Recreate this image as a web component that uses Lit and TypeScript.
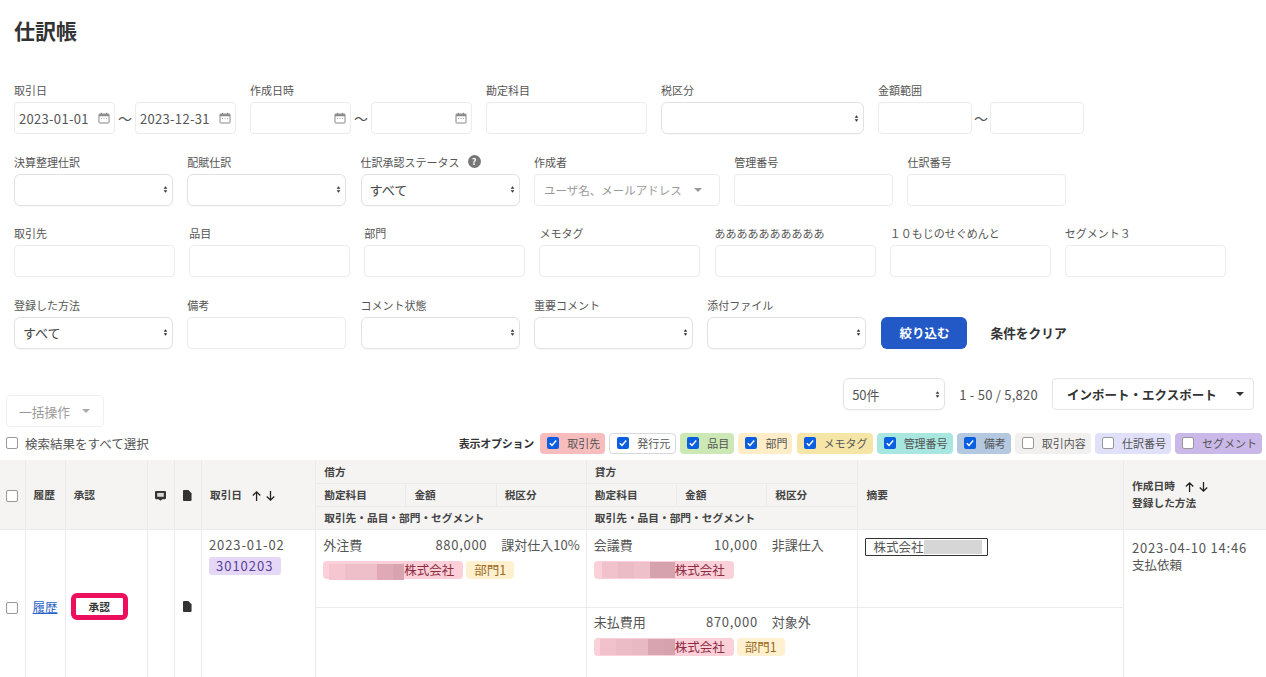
import { LitElement, html, css, svg } from 'lit';
import { customElement } from 'lit/decorators.js';

const calendar = html`<svg class="cal" viewBox="0 0 12 12" width="12" height="12">
  <path d="M1.5 2h9a.5.5 0 0 1 .5.5v8a.5.5 0 0 1-.5.5h-9a.5.5 0 0 1-.5-.5v-8a.5.5 0 0 1 .5-.5z" fill="none" stroke="#888" stroke-width="1"/>
  <path d="M1 2.2h10v2H1zM3 .8h1v2H3zM8 .8h1v2H8z" fill="#888"/>
  <path d="M3 6.5h1M5.5 6.5h1M8 6.5h1" stroke="#aaa" stroke-width="1"/>
</svg>`;

const updown = html`<svg class="updown" viewBox="0 0 6 10" width="5" height="9">
  <path d="M3 1l2.2 3H.8zM3 9L.8 6h4.4z" fill="#333"/>
</svg>`;

const caret = (color = '#555') => html`<svg class="caret" viewBox="0 0 10 6" width="10" height="6">
  <path d="M1 1h8L5 5z" fill=${color}/>
</svg>`;

const sortIcons = html`<svg class="sort" viewBox="0 0 28 12" width="26" height="12">
  ${svg`<path d="M6 11.5V2M2 5.5L6 1.5l4 4M21 .5V10M17 6.5l4 4 4-4" fill="none" stroke="#222" stroke-width="1.4"/>`}
</svg>`;

const fileIcon = html`<svg viewBox="0 0 10 12" width="9" height="11">
  <path d="M1 0h5l3.5 3.5V11a1 1 0 0 1-1 1H1a1 1 0 0 1-1-1V1a1 1 0 0 1 1-1z" fill="#333"/>
</svg>`;

const commentIcon = html`<svg viewBox="0 0 12 12" width="11" height="11">
  <path d="M1.2 1h9.6A1.2 1.2 0 0 1 12 2.2v6.6A1.2 1.2 0 0 1 10.8 10H8l-2 1.6L4 10H1.2A1.2 1.2 0 0 1 0 8.8V2.2A1.2 1.2 0 0 1 1.2 1z" fill="#333"/>
  <path d="M2.4 3.2h7.2v4.2H2.400z" fill="#d8d7d5"/>
</svg>`;

const chips = [
  { label: '取引先', cls: 'c-red', on: true },
  { label: '発行元', cls: 'c-white', on: true },
  { label: '品目', cls: 'c-green', on: true },
  { label: '部門', cls: 'c-orange', on: true },
  { label: 'メモタグ', cls: 'c-yellow', on: true },
  { label: '管理番号', cls: 'c-teal', on: true },
  { label: '備考', cls: 'c-blue', on: true },
  { label: '取引内容', cls: 'c-gray', on: false },
  { label: '仕訳番号', cls: 'c-lav', on: false },
  { label: 'セグメント', cls: 'c-purple', on: false },
];

// 伏せ字のモザイク [幅, 色]
type Block = [number, string];

const mosaic = (blocks: Block[], low = false) => html`<span class="mosaic ${low ? 'low' : ''}">
  ${blocks.map(([w, c]) => html`<i style="width:${w}px;background:${c}"></i>`)}
</span>`;

const mosaicA: Block[] = [[16, '#f5c6d0'], [16, '#efbfc9'], [16, '#eebec9'], [16, '#dfaab6'], [11, '#d8a4b0']];
const mosaicB: Block[] = [[16, '#f2c2cc'], [16, '#ecbcc6'], [16, '#eec0ca'], [25, '#d6a2ae']];
const mosaicC: Block[] = [[16, '#f2c2cc'], [16, '#ecbcc6'], [16, '#e9b9c3'], [16, '#d8a4b0'], [11, '#d6a2ae']];

@customElement('app-root')
export class AppRoot extends LitElement {
  static styles = css`
    :host {
      display: block;
      height: 677px;
      overflow: hidden;
      background: #fff;
      color: #444;
      font-family: 'Noto Sans CJK JP', 'Liberation Sans', sans-serif;
      font-size: 13px;
    }
    h1 {
      margin: 0;
      padding: 14px 14px 0;
      font-size: 21px;
      line-height: 32px;
      font-weight: 700;
      color: #333;
    }
    .filters {
      padding: 36px 14px 0;
    }
    .row {
      display: flex;
      gap: 14.3px;
      height: 71.5px;
      align-items: flex-start;
    }
    .row1 {
      gap: 14px;
    }
    .row3 {
      gap: 14.15px;
    }
    .field {
      display: flex;
      flex-direction: column;
    }
    .field > label {
      font-size: 11px;
      line-height: 16px;
      height: 16px;
      margin-bottom: 4px;
      color: #555;
      display: flex;
      align-items: center;
      gap: 8px;
      white-space: nowrap;
    }
    .box {
      box-sizing: border-box;
      height: 32px;
      border: 1px solid #ececec;
      border-radius: 4px;
      background: #fff;
      display: flex;
      align-items: center;
      padding: 0 4px;
    }
    .select {
      border-radius: 6px;
      border-color: #e2e2e2;
      box-shadow: 0 1px 1px rgba(0, 0, 0, 0.03);
      padding: 0 4px 0 8px;
      justify-content: space-between;
    }
    .w159 { width: 159px; }
    .w161 { width: 161px; }
    .w203 { width: 203px; }
    .w186 { width: 186px; }
    .date {
      width: 101px;
      justify-content: space-between;
      padding: 0 4px 0 4px;
      letter-spacing: 0.3px;
      color: #555;
    }
    .range {
      display: flex;
      align-items: center;
      gap: 0;
    }
    .tilde {
      width: 20px;
      text-align: center;
      color: #555;
      font-size: 14px;
    }
    .amount1 { width: 94px; }
    .amount2 { width: 94px; }
    .tilde2 { width: 18px; }
    .help {
      width: 13px;
      height: 13px;
      border-radius: 50%;
      background: #777;
      color: #fff;
      font-size: 9px;
      line-height: 13px;
      text-align: center;
      font-weight: 700;
    }
    .placeholder {
      color: #999;
      font-size: 11.5px;
      padding-left: 4px;
      white-space: nowrap;
    }
    .user {
      padding: 0 16px 0 5px;
      justify-content: space-between;
    }
    .actions {
      display: flex;
      align-items: center;
      padding-top: 20px;
      padding-left: 1px;
      gap: 23px;
    }
    .primary {
      box-sizing: border-box;
      width: 86px;
      height: 32px;
      border-radius: 6px;
      border: 0;
      background: #2259c6;
      color: #fff;
      font: 700 12.5px 'Noto Sans CJK JP', sans-serif;
    }
    .clear {
      font-size: 12.7px;
      font-weight: 700;
      color: #333;
    }
    .toolbar {
      display: flex;
      justify-content: space-between;
      padding: 0 12px 0 6px;
      height: 63px;
    }
    .bulk {
      box-sizing: border-box;
      width: 98px;
      height: 32px;
      margin-top: 27px;
      border: 1px solid #f0f0f0;
      border-radius: 4px;
      display: flex;
      align-items: center;
      justify-content: center;
      gap: 11px;
      color: #999;
      font-size: 12.8px;
    }
    .right {
      display: flex;
      align-items: center;
      height: 32px;
      margin-top: 10px;
    }
    .per {
      box-sizing: border-box;
      width: 102px;
      height: 32px;
      font-size: 13px;
      color: #555;
    }
    .count {
      margin: 0 14px;
      font-size: 13px;
      letter-spacing: 0.25px;
      color: #555;
      white-space: nowrap;
    }
    .export {
      box-sizing: border-box;
      width: 202px;
      height: 32px;
      border: 1px solid #e4e4e4;
      border-radius: 4px;
      display: flex;
      align-items: center;
      justify-content: space-between;
      padding: 0 8px 0 14px;
      font-size: 12.5px;
      font-weight: 700;
      color: #333;
      white-space: nowrap;
    }
    .options {
      display: flex;
      justify-content: space-between;
      align-items: center;
      height: 24px;
      padding: 0 4px 0 6px;
    }
    .all {
      display: flex;
      align-items: center;
      gap: 7px;
      font-size: 12.5px;
      color: #555;
    }
    .cb {
      box-sizing: border-box;
      display: inline-block;
      flex: none;
      width: 12px;
      height: 12px;
      border: 1px solid #999;
      border-radius: 2px;
      background: #fff;
    }
    .cb.on {
      border: 0;
      background: #0a5fe0;
    }
    .cb.on svg {
      display: block;
    }
    .chips {
      display: flex;
      align-items: center;
      gap: 4.1px;
    }
    .chips b {
      font-size: 11px;
      letter-spacing: -0.25px;
      font-weight: 700;
      margin-right: 2px;
      color: #333;
      white-space: nowrap;
    }
    .chip {
      box-sizing: border-box;
      height: 21px;
      display: flex;
      align-items: center;
      gap: 8px;
      padding: 0 5px 0 7px;
      border-radius: 4px;
      font-size: 11px;
      color: #555;
      white-space: nowrap;
    }
    .c-red { background: #f7bcbc; }
    .c-white { background: #fff; border: 1px solid #d8d8d8; }
    .c-green { background: #cce8b5; }
    .c-orange { background: #ffedc8; }
    .c-yellow { background: #f5e6a8; }
    .c-teal { background: #a8e6e0; }
    .c-blue { background: #b4c8e0; }
    .c-gray { background: #f2f0ee; }
    .c-lav { background: #e0e0fa; }
    .c-purple { background: #c9b8e8; }

    table {
      table-layout: fixed;
      border-collapse: collapse;
      width: 1266px;
      margin-top: 5px;
    }
    col.c1 { width: 25px; }
    col.c2 { width: 40px; }
    col.c3 { width: 82px; }
    col.c4 { width: 27px; }
    col.c5 { width: 27px; }
    col.c6 { width: 114px; }
    col.c7 { width: 90px; }
    col.c8 { width: 91px; }
    col.c9 { width: 265px; }
    col.c10 { width: 142px; }
    th {
      background: #f5f4f2;
      border: 1px solid #ebebeb;
      border-top: 0;
      font-size: 10.7px;
      font-weight: 700;
      text-align: left;
      color: #444;
      padding: 0 8px;
      height: 23px;
      box-sizing: border-box;
      white-space: nowrap;
    }
    th:first-child, td:first-child { border-left: 0; }
    th:last-child, td:last-child { border-right: 0; }
    th.ctr, td.ctr { text-align: center; padding: 0; }
    th svg { vertical-align: middle; }
    th .sort { margin-left: 9px; }
    th.hmade { line-height: 17px; }
    td {
      border: 1px solid #ebebeb;
      box-sizing: border-box;
      padding: 0;
      vertical-align: top;
      font-size: 13px;
      color: #555;
    }
    tr.r1 td { height: 78px; }
    tr.r2 td { height: 76px; }
    td.mid { vertical-align: middle; text-align: center; }
    td.mid .cb { vertical-align: middle; }
    td.appr { text-align: left; padding-left: 5px; }
    th .cb { vertical-align: middle; }
    a {
      color: #2b62c9;
      font-size: 12.5px;
      text-decoration: underline;
    }
    .approve {
      display: inline-flex;
      box-sizing: border-box;
      width: 57px;
      height: 27px;
      align-items: center;
      justify-content: center;
      border: 5px solid #ec0f5d;
      border-radius: 6px;
      background: #fff;
      font-size: 10.7px;
      font-weight: 700;
      color: #333;
      vertical-align: middle;
    }
    .dt {
      padding: 6px 8px 0 7px;
      line-height: 18px;
      letter-spacing: 0.9px;
    }
    .slip {
      display: block;
      width: fit-content;
      box-sizing: border-box;
      height: 18px;
      line-height: 18px;
      margin-top: 3px;
      padding: 0 8px 0 7px;
      border-radius: 3px;
      background: #e4d8f6;
      color: #5a3d9a;
      letter-spacing: 1px;
    }
    .line {
      display: flex;
      padding: 6px 6px 0 7px;
      line-height: 18px;
      white-space: nowrap;
    }
    .r2 .line { padding-top: 5px; }
    .r2 .tags { padding-top: 7px; }
    .acc { width: 72px; }
    .amt { width: 92px; text-align: right; letter-spacing: 0.7px; }
    .tax { margin-left: 14px; }
    .tags {
      display: flex;
      gap: 3px;
      padding: 7px 0 0 7px;
    }
    .tag {
      display: inline-flex;
      align-items: center;
      box-sizing: border-box;
      height: 18px;
      border-radius: 4px;
      font-size: 12.5px;
      white-space: nowrap;
    }
    .tag.pink {
      background: #fbd0d8;
      color: #8e2c3f;
      width: 140px;
      padding-left: 6px;
    }
    .tag.amber {
      background: #fff0cf;
      color: #9a6a1e;
      padding: 0 8px;
    }
    .mosaic {
      display: flex;
      justify-content: flex-end;
      width: 75px;
      height: 16px;
      flex: none;
    }
    .mosaic.low {
      position: relative;
      top: 2px;
    }
    .mosaic i {
      display: block;
      flex: none;
    }
    .memo {
      display: inline-flex;
      align-items: center;
      box-sizing: border-box;
      width: 123px;
      height: 18px;
      margin: 8px 0 0 7px;
      padding-left: 7px;
      border: 1px solid #333;
      border-radius: 1px;
      font-size: 12.5px;
      white-space: nowrap;
      overflow: hidden;
    }
    .memo span {
      display: block;
      width: 58px;
      height: 14px;
      background: #d6d6d6;
      margin-left: 1px;
    }
    .made {
      padding: 9px 8px 0 8px;
      line-height: 17px;
      white-space: nowrap;
      font-size: 12.5px;
    }
    .made span {
      font-size: 13px;
      letter-spacing: 0.8px;
    }
  `;

  private box(cls = 'w159', content: unknown = '') {
    return html`<div class="box ${cls}">${content}</div>`;
  }

  private select(cls = 'w159', text = '') {
    return html`<div class="box select ${cls}"><span>${text}</span>${updown}</div>`;
  }

  private check(on: boolean) {
    return html`<span class="cb ${on ? 'on' : ''}">
      ${on
        ? html`<svg viewBox="0 0 12 12" width="12" height="12"><path d="M2.8 6.2l2.2 2.3 4.2-5" fill="none" stroke="#fff" stroke-width="1.5"/></svg>`
        : ''}
    </span>`;
  }

  render() {
    return html`
      <h1>仕訳帳</h1>
      <div class="filters">
        <div class="row row1">
          <div class="field">
            <label>取引日</label>
            <div class="range">
              <div class="box date"><span>2023-01-01</span>${calendar}</div>
              <span class="tilde">〜</span>
              <div class="box date"><span>2023-12-31</span>${calendar}</div>
            </div>
          </div>
          <div class="field">
            <label>作成日時</label>
            <div class="range">
              <div class="box date"><span></span>${calendar}</div>
              <span class="tilde">〜</span>
              <div class="box date"><span></span>${calendar}</div>
            </div>
          </div>
          <div class="field"><label>勘定科目</label>${this.box('w161')}</div>
          <div class="field"><label>税区分</label>${this.select('w203')}</div>
          <div class="field">
            <label>金額範囲</label>
            <div class="range">
              ${this.box('amount1')}
              <span class="tilde tilde2">〜</span>
              ${this.box('amount2')}
            </div>
          </div>
        </div>
        <div class="row">
          <div class="field"><label>決算整理仕訳</label>${this.select()}</div>
          <div class="field"><label>配賦仕訳</label>${this.select()}</div>
          <div class="field">
            <label>仕訳承認ステータス <span class="help">?</span></label>
            ${this.select('w159', 'すべて')}
          </div>
          <div class="field">
            <label>作成者</label>
            <div class="box w186 user">
              <span class="placeholder">ユーザ名、メールアドレス</span>${caret('#999')}
            </div>
          </div>
          <div class="field"><label>管理番号</label>${this.box()}</div>
          <div class="field"><label>仕訳番号</label>${this.box()}</div>
        </div>
        <div class="row row3">
          ${['取引先', '品目', '部門', 'メモタグ', 'ああああああああああ', '１０もじのせぐめんと', 'セグメント３'].map(
            (l) => html`<div class="field"><label>${l}</label>${this.box('w161')}</div>`
          )}
        </div>
        <div class="row">
          <div class="field"><label>登録した方法</label>${this.select('w159', 'すべて')}</div>
          <div class="field"><label>備考</label>${this.box()}</div>
          <div class="field"><label>コメント状態</label>${this.select()}</div>
          <div class="field"><label>重要コメント</label>${this.select()}</div>
          <div class="field"><label>添付ファイル</label>${this.select()}</div>
          <div class="actions">
            <button class="primary">絞り込む</button>
            <span class="clear">条件をクリア</span>
          </div>
        </div>
      </div>

      <div class="toolbar">
        <div class="bulk">一括操作 ${caret('#aaa')}</div>
        <div class="right">
          <div class="box select per"><span>50件</span>${updown}</div>
          <span class="count">1 - 50 / 5,820</span>
          <div class="export">インポート・エクスポート ${caret('#333')}</div>
        </div>
      </div>

      <div class="options">
        <div class="all">${this.check(false)}検索結果をすべて選択</div>
        <div class="chips">
          <b>表示オプション</b>
          ${chips.map((c) => html`<div class="chip ${c.cls}">${this.check(c.on)}${c.label}</div>`)}
        </div>
      </div>

      <table>
        <colgroup>
          <col class="c1" /><col class="c2" /><col class="c3" /><col class="c4" /><col class="c5" /><col class="c6" />
          <col class="c7" /><col class="c7" /><col class="c7" />
          <col class="c7" /><col class="c7" /><col class="c8" />
          <col class="c9" /><col class="c10" />
        </colgroup>
        <thead>
          <tr>
            <th class="ctr" rowspan="3">${this.check(false)}</th>
            <th rowspan="3">履歴</th>
            <th rowspan="3">承認</th>
            <th class="ctr" rowspan="3">${commentIcon}</th>
            <th class="ctr" rowspan="3">${fileIcon}</th>
            <th rowspan="3">取引日${sortIcons}</th>
            <th colspan="3">借方</th>
            <th colspan="3">貸方</th>
            <th rowspan="3">摘要</th>
            <th class="hmade" rowspan="3">作成日時${sortIcons}<br />登録した方法</th>
          </tr>
          <tr>
            <th>勘定科目</th><th>金額</th><th>税区分</th>
            <th>勘定科目</th><th>金額</th><th>税区分</th>
          </tr>
          <tr>
            <th colspan="3">取引先・品目・部門・セグメント</th>
            <th colspan="3">取引先・品目・部門・セグメント</th>
          </tr>
        </thead>
        <tbody>
          <tr class="r1">
            <td class="mid" rowspan="2">${this.check(false)}</td>
            <td class="mid" rowspan="2"><a href="#">履歴</a></td>
            <td class="mid appr" rowspan="2"><span class="approve">承認</span></td>
            <td rowspan="2"></td>
            <td class="mid" rowspan="2">${fileIcon}</td>
            <td rowspan="2">
              <div class="dt">2023-01-02<span class="slip">3010203</span></div>
            </td>
            <td colspan="3">
              <div class="line"><span class="acc">外注費</span><span class="amt">880,000</span><span class="tax">課対仕入10%</span></div>
              <div class="tags">
                <span class="tag pink">${mosaic(mosaicA, true)}株式会社</span>
                <span class="tag amber">部門1</span>
              </div>
            </td>
            <td colspan="3">
              <div class="line"><span class="acc">会議費</span><span class="amt">10,000</span><span class="tax">非課仕入</span></div>
              <div class="tags"><span class="tag pink">${mosaic(mosaicB)}株式会社</span></div>
            </td>
            <td><div class="memo">株式会社<span></span></div></td>
            <td rowspan="2">
              <div class="made"><span>2023-04-10 14:46</span><br />支払依頼</div>
            </td>
          </tr>
          <tr class="r2">
            <td colspan="3"></td>
            <td colspan="3">
              <div class="line"><span class="acc">未払費用</span><span class="amt">870,000</span><span class="tax">対象外</span></div>
              <div class="tags">
                <span class="tag pink">${mosaic(mosaicC)}株式会社</span>
                <span class="tag amber">部門1</span>
              </div>
            </td>
            <td></td>
          </tr>
        </tbody>
      </table>
    `;
  }
}
